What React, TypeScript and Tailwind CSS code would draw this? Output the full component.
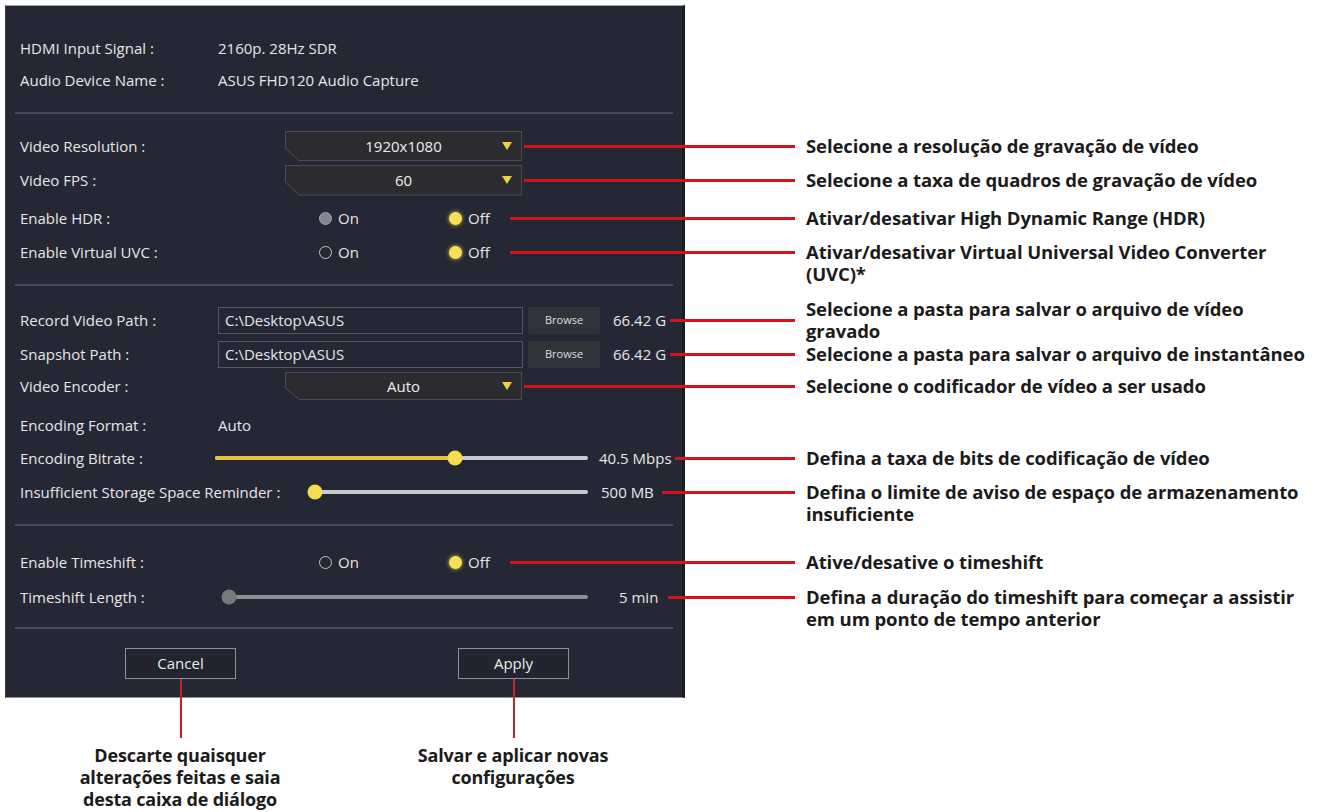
import React from 'react';

type Note = { lines: string[]; align?: 'first' | 'center' };

function Annotation({ note }: { note: Note }) {
  return (
    <div className="flex items-center self-stretch">
      <div className="h-[3px] w-[113px] bg-[#d5121b]" />
      <div
        className={`ml-[11px] whitespace-nowrap font-['Open_Sans',sans-serif] text-[18.5px] font-bold leading-[22px] tracking-[-0.1px] text-[#1b1b1b] ${
          note.align === 'first' ? 'h-[22px]' : ''
        }`}
      >
        {note.lines.map((l, i) => (
          <React.Fragment key={i}>
            {i > 0 && <br />}
            {l}
          </React.Fragment>
        ))}
      </div>
    </div>
  );
}

interface RowProps {
  h: string;
  label: string;
  children?: React.ReactNode;
  note?: Note;
  lineGap?: string;
}

function Row({ h, label, children, note, lineGap = 'ml-[6px]' }: RowProps) {
  return (
    <div className={`flex w-[1316px] shrink-0 items-center ${h}`}>
      <div className="flex w-[676px] shrink-0 items-center self-stretch pl-[14px]">
        <span className="w-[198px] shrink-0 whitespace-nowrap">{label}</span>
        {children}
        {note && <div className={`h-[3px] flex-1 bg-[#d5121b] ${lineGap}`} />}
      </div>
      {note && <Annotation note={note} />}
    </div>
  );
}

const Separator = ({ mt }: { mt: string }) => (
  <div className={`mx-[9px] h-[2px] shrink-0 bg-[#474b57] ${mt}`} />
);

function Dropdown({ value, h }: { value: string; h: string }) {
  return (
    <div
      className={`ml-[67px] w-[237px] bg-[#4b4c52] p-[1px] [clip-path:polygon(0_0,100%_0,100%_100%,14px_100%,0_58%)] ${h}`}
    >
      <div className="grid h-full grid-cols-[28px_1fr_28px] items-center bg-[#2c2c30] [clip-path:polygon(0_0,100%_0,100%_100%,13px_100%,0_58%)]">
        <span />
        <span className="text-center text-[15px] text-[#ececec]">{value}</span>
        <svg width="10" height="8" viewBox="0 0 10 8" className="justify-self-center">
          <path d="M0 0 H10 L5 8 Z" fill="#efcf3f" />
        </svg>
      </div>
    </div>
  );
}

function Radio({ kind, label }: { kind: 'on' | 'off' | 'disabled'; label: string }) {
  const dot =
    kind === 'on'
      ? 'bg-[#f4e05a] shadow-[0_0_4px_#d8c23a]'
      : kind === 'disabled'
      ? 'bg-[#85878d] border border-[#a3a5aa]'
      : 'border-[1.5px] border-[#c4c6cb]';
  return (
    <div className="flex items-center">
      <span className={`h-[13px] w-[13px] rounded-full ${dot}`} />
      <span className="ml-[6px]">{label}</span>
    </div>
  );
}

function RadioPair({ onKind }: { onKind: 'off' | 'disabled' }) {
  return (
    <>
      <div className="ml-[101px] w-[130px]">
        <Radio kind={onKind} label="On" />
      </div>
      <Radio kind="on" label="Off" />
    </>
  );
}

function Slider({
  pct,
  w,
  fill,
  track,
  thumb,
}: {
  pct: number;
  w: string;
  fill: string;
  track: string;
  thumb: string;
}) {
  return (
    <div className={`relative h-[4px] rounded-full ${w} ${track}`}>
      <div className={`h-full rounded-full ${fill}`} style={{ width: `${pct}%` }} />
      <div
        className={`absolute top-1/2 h-[15px] w-[15px] -translate-x-1/2 -translate-y-1/2 rounded-full ${thumb}`}
        style={{ left: `calc(7px + ${pct}% - ${(pct * 14) / 100}px)` }}
      />
    </div>
  );
}

function PathInput({ path }: { path: string }) {
  return (
    <>
      <div className="flex h-[27px] w-[305px] items-center border border-[#545765] px-[6px]">
        {path}
      </div>
      <div className="ml-[5px] flex h-[27px] w-[72px] items-center justify-center rounded-[2px] bg-[#31333b] text-[11px] text-[#dedede]">
        Browse
      </div>
      <span className="ml-[13px] whitespace-nowrap">66.42 G</span>
    </>
  );
}

function DialogButton({ label }: { label: string }) {
  return (
    <div className="flex w-[111px] flex-col items-center">
      <div className="flex h-[31px] w-full items-center justify-center border-[1.5px] border-[#8e919a] bg-[#22252f] text-[#ececec]">
        {label}
      </div>
      <div className="h-[59px] w-[2px] bg-[#c8202a]" />
    </div>
  );
}

export default function App() {
  return (
    <div className="h-[812px] w-[1326px] overflow-hidden bg-white pl-[5px] pt-[5px] font-['Open_Sans','Noto_Sans',sans-serif] text-[15px] text-[#e6e6e6]">
      <div className="flex h-[693px] w-[680px] flex-col border-b border-l border-r-[3px] border-t border-b-[#8d8f95] border-l-[#3b3e49] border-r-[#1b1d25] border-t-[#a3a5ab] bg-[#252834] pt-[26px]">
        <Row h="h-[32px]" label="HDMI Input Signal :">
          <span>2160p. 28Hz SDR</span>
        </Row>
        <Row h="h-[32px]" label="Audio Device Name :">
          <span>ASUS FHD120 Audio Capture</span>
        </Row>

        <Separator mt="mt-[16px]" />

        <div className="mt-[16px]" />
        <Row
          h="h-[32px]"
          label="Video Resolution :"
          lineGap="ml-[2px]"
          note={{ lines: ['Selecione a resolução de gravação de vídeo'] }}
        >
          <Dropdown value="1920x1080" h="h-[30px]" />
        </Row>
        <Row
          h="h-[36px]"
          label="Video FPS :"
          lineGap="ml-[2px]"
          note={{ lines: ['Selecione a taxa de quadros de gravação de vídeo'] }}
        >
          <Dropdown value="60" h="h-[31px]" />
        </Row>
        <Row
          h="h-[40px]"
          label="Enable HDR :"
          lineGap="ml-[20px]"
          note={{ lines: ['Ativar/desativar High Dynamic Range (HDR)'] }}
        >
          <RadioPair onKind="disabled" />
        </Row>
        <Row
          h="h-[28px]"
          label="Enable Virtual UVC :"
          lineGap="ml-[20px]"
          note={{
            lines: ['Ativar/desativar Virtual Universal Video Converter', '(UVC)*'],
            align: 'first',
          }}
        >
          <RadioPair onKind="off" />
        </Row>

        <Separator mt="mt-[18px]" />

        <div className="mt-[17px]" />
        <Row
          h="h-[34px]"
          label="Record Video Path :"
          lineGap="ml-[4px]"
          note={{ lines: ['Selecione a pasta para salvar o arquivo de vídeo', 'gravado'] }}
        >
          <PathInput path="C:\Desktop\ASUS" />
        </Row>
        <Row
          h="h-[34px]"
          label="Snapshot Path :"
          lineGap="ml-[4px]"
          note={{ lines: ['Selecione a pasta para salvar o arquivo de instantâneo'] }}
        >
          <PathInput path="C:\Desktop\ASUS" />
        </Row>
        <Row
          h="h-[30px]"
          label="Video Encoder :"
          lineGap="ml-[2px]"
          note={{ lines: ['Selecione o codificador de vídeo a ser usado'] }}
        >
          <Dropdown value="Auto" h="h-[28px]" />
        </Row>
        <Row h="h-[48px]" label="Encoding Format :">
          <span>Auto</span>
        </Row>
        <Row
          h="h-[18px]"
          label="Encoding Bitrate :"
          lineGap="ml-[3px]"
          note={{ lines: ['Defina a taxa de bits de codificação de vídeo'] }}
        >
          <div className="ml-[-3px]">
            <Slider
              pct={65}
              w="w-[373px]"
              fill="bg-[#e4c33e]"
              track="bg-[#c9cacd]"
              thumb="bg-[#f4de4f]"
            />
          </div>
          <span className="ml-[11px] whitespace-nowrap">40.5 Mbps</span>
        </Row>
        <Row
          h="h-[50px]"
          label="Insufficient Storage Space Reminder :"
          lineGap="ml-[8px]"
          note={{ lines: ['Defina o limite de aviso de espaço de armazenamento', 'insuficiente'], align: 'first' }}
        >
          <div className="ml-[90px]">
            <Slider
              pct={0}
              w="w-[280px]"
              fill="bg-[#e4c33e]"
              track="bg-[#c9cacd]"
              thumb="bg-[#f4de4f]"
            />
          </div>
          <span className="ml-[13px] whitespace-nowrap">500 MB</span>
        </Row>

        <Separator mt="mt-[7px]" />

        <div className="mt-[19px]" />
        <Row
          h="h-[34px]"
          label="Enable Timeshift :"
          lineGap="ml-[20px]"
          note={{ lines: ['Ative/desative o timeshift'] }}
        >
          <RadioPair onKind="off" />
        </Row>
        <Row
          h="h-[36px]"
          label="Timeshift Length :"
          lineGap="ml-[10px]"
          note={{
            lines: ['Defina a duração do timeshift para começar a assistir', 'em um ponto de tempo anterior'],
            align: 'first',
          }}
        >
          <div className="ml-[4px]">
            <Slider
              pct={0}
              w="w-[366px]"
              fill="bg-[#8d8e92]"
              track="bg-[#8d8e92]"
              thumb="bg-[#77787d]"
            />
          </div>
          <span className="ml-[31px] whitespace-nowrap">5 min</span>
        </Row>

        <Separator mt="mt-[12px]" />

        <div className="mt-[19px] flex items-start pl-[119px]">
          <DialogButton label="Cancel" />
          <div className="ml-[222px]">
            <DialogButton label="Apply" />
          </div>
        </div>
      </div>

      <div className="mt-[46px] flex font-['Open_Sans',sans-serif] text-[18px] font-bold leading-[22px] tracking-[-0.2px] text-[#1b1b1b]">
        <div className="ml-[25px] w-[300px] text-center">
          Descarte quaisquer
          <br />
          alterações feitas e saia
          <br />
          desta caixa de diálogo
        </div>
        <div className="ml-[33px] w-[300px] text-center">
          Salvar e aplicar novas
          <br />
          configurações
        </div>
      </div>
    </div>
  );
}
